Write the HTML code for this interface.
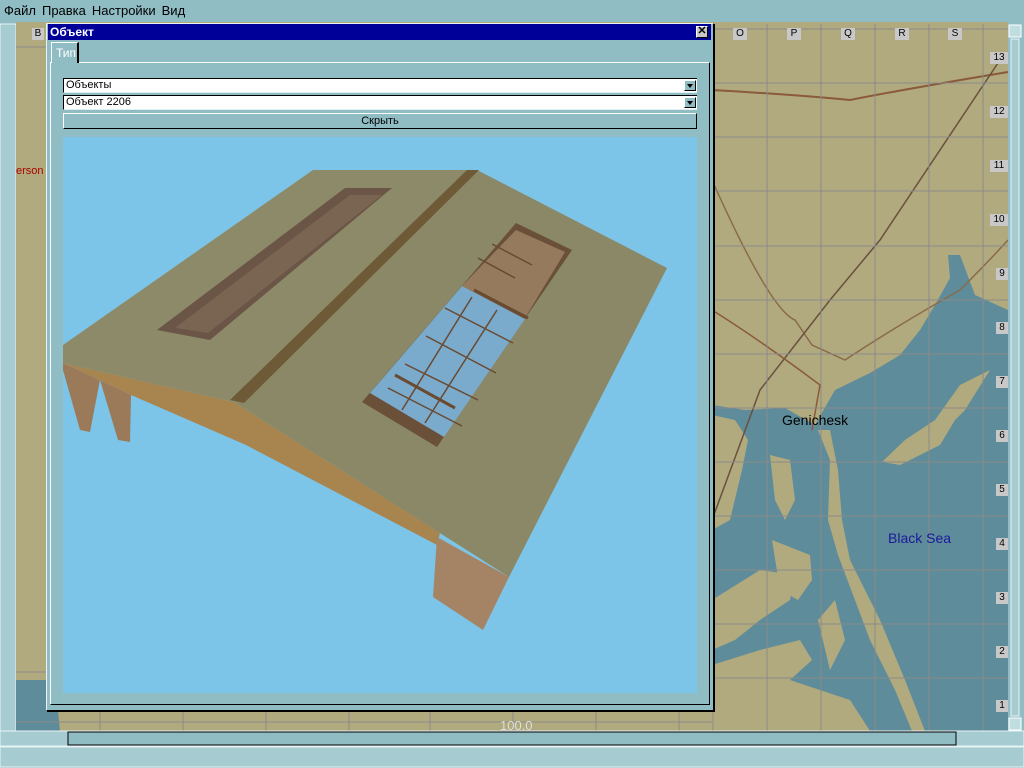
<!DOCTYPE html>
<html><head><meta charset="utf-8"><style>
*{margin:0;padding:0;box-sizing:border-box}
body{width:1024px;height:768px;background:#90bcc4;position:relative;overflow:hidden;font-family:"Liberation Sans",sans-serif;font-size:12px;color:#000}
.abs{position:absolute}
.menu span{margin-right:6px}
.lab{position:absolute;background:#c8c8c8;font-size:10px;text-align:center;line-height:12px;height:12px;color:#000}
.combo{position:absolute;left:63px;width:634px;height:15px;background:#fff;border-top:1px solid #000;border-left:1px solid #000;border-bottom:1px solid #e0f0f0;font-size:11px;line-height:13px;padding-left:2px}
.combo b{position:absolute;right:1px;top:1px;width:12px;height:11px;background:#90bcc4;border:1px solid #000;border-top-color:#fff;border-left-color:#fff}
.combo b:after{content:"";position:absolute;left:2px;top:3px;border-left:3px solid transparent;border-right:3px solid transparent;border-top:4px solid #000}
</style></head><body>
<div class="abs menu" style="left:4px;top:3px;font-size:13px"><span>Файл</span><span>Правка</span><span>Настройки</span><span>Вид</span></div>

<svg class="abs" style="left:0;top:0" width="1024" height="768">
 <rect x="0" y="22" width="1024" height="746" fill="#90bcc4"/>
 <rect x="0" y="24" width="16" height="707" fill="#a6ccd2" stroke="#e8f4f4"/>
 <rect x="16" y="22" width="992" height="709" fill="#b1aa7e"/>
 <!-- sea -->
 <path d="M712,405 L745,410 L785,408 L815,425 L835,390 L870,373 L900,355 L920,330 L935,305 L950,278 L948,255 L960,255 L975,295 L1008,310 L1008,731 L712,731 Z" fill="#5f8c9a"/>
 <path d="M818,430 L830,460 L828,520 L838,555 L870,640 L895,690 L912,731 L925,731 L905,680 L880,620 L850,560 L842,520 L838,470 L830,430 Z" fill="#b1aa7e"/>
 <path d="M882,462 L905,440 L935,420 L960,385 L990,370 L965,410 L955,420 L940,445 L900,465 Z" fill="#b1aa7e"/>
 <path d="M712,415 L735,420 L748,440 L742,470 L730,520 L712,530 Z" fill="#b1aa7e"/>
 <path d="M770,455 L790,460 L795,500 L785,520 L775,500 Z" fill="#b1aa7e"/>
 <path d="M772,540 L810,555 L812,580 L798,600 L780,590 Z" fill="#b1aa7e"/>
 <path d="M712,600 L760,570 L795,575 L790,600 L760,620 L735,640 L712,650 Z" fill="#b1aa7e"/>
 <path d="M712,665 L760,650 L800,640 L812,660 L790,680 L820,690 L850,700 L870,731 L712,731 Z" fill="#b1aa7e"/>
 <path d="M818,620 L835,600 L845,640 L830,670 Z" fill="#b1aa7e"/>
 <path d="M16,680 L55,680 L60,731 L16,731 Z" fill="#5f8c9a"/>
 <!-- roads -->
 <path d="M712,90 Q800,95 850,100 Q900,90 1008,72" stroke="#8a5a3a" stroke-width="2" fill="none"/>
 <path d="M712,180 Q770,310 795,320 L812,345 L845,360 Q890,330 960,290 Q990,260 1008,240" stroke="#8a6a4a" stroke-width="1.5" fill="none"/>
 <path d="M712,520 L760,390 L830,300 L880,240 L1000,60" stroke="#6a5040" stroke-width="1.5" fill="none"/>
 <path d="M712,310 Q760,340 820,385 L812,430" stroke="#8a5a3a" stroke-width="1.5" fill="none"/>
 <!-- grid -->
 <g stroke="#8a8a8a" stroke-width="1">
  <path d="M767,24V731M821,24V731M875,24V731M929,24V731M983,24V731M713,24V731"/>
  <path d="M712,29H1008M712,83H1008M712,137H1008M712,191H1008M712,246H1008M712,300H1008M712,354H1008M712,408H1008M712,462H1008M712,516H1008M712,570H1008M712,624H1008M712,678H1008"/>
  <path d="M16,47H46M16,672H46M16,722H712M100,710V731M183,710V731M266,710V731M349,710V731M430,710V731M513,710V731M596,710V731M679,710V731"/>
 </g>
 <text x="782" y="425" font-family="Liberation Sans" font-size="14" fill="#000">Genichesk</text>
 <text x="888" y="543" font-family="Liberation Sans" font-size="14" fill="#1a1a9a">Black Sea</text>
 <text x="500" y="730" font-family="Liberation Sans" font-size="13" fill="#ddd">100.0</text>
 <text x="16" y="174" font-family="Liberation Sans" font-size="11" fill="#a00">erson</text>
 <!-- right scrollbar -->
 <rect x="1008" y="24" width="16" height="707" fill="#90bcc4"/>
 <rect x="1009" y="25" width="12" height="12" fill="#c0dde0" stroke="#fff"/>
 <rect x="1011" y="39" width="8" height="677" fill="#a6ccd2" stroke="#e8f4f4"/>
 <rect x="1009" y="718" width="12" height="12" fill="#c0dde0" stroke="#fff"/>
 <!-- bottom scrollbar -->
 <rect x="0" y="731" width="1024" height="15" fill="#a6ccd2" stroke="#e8f4f4"/>
 <rect x="68" y="732" width="888" height="13" fill="#90bcc4" stroke="#000" stroke-width="1"/>
 <rect x="0" y="747" width="1024" height="20" fill="#a6ccd2" stroke="#e8f4f4"/>
</svg>
<div class="lab" style="left:733px;top:28px;width:14px">O</div>
<div class="lab" style="left:787px;top:28px;width:14px">P</div>
<div class="lab" style="left:841px;top:28px;width:14px">Q</div>
<div class="lab" style="left:895px;top:28px;width:14px">R</div>
<div class="lab" style="left:948px;top:28px;width:14px">S</div>
<div class="lab" style="left:32px;top:28px;width:12px">B</div>
<div class="lab" style="left:990px;top:52px;width:18px">13</div>
<div class="lab" style="left:990px;top:106px;width:18px">12</div>
<div class="lab" style="left:990px;top:160px;width:18px">11</div>
<div class="lab" style="left:990px;top:214px;width:18px">10</div>
<div class="lab" style="left:996px;top:268px;width:12px">9</div>
<div class="lab" style="left:996px;top:322px;width:12px">8</div>
<div class="lab" style="left:996px;top:376px;width:12px">7</div>
<div class="lab" style="left:996px;top:430px;width:12px">6</div>
<div class="lab" style="left:996px;top:484px;width:12px">5</div>
<div class="lab" style="left:996px;top:538px;width:12px">4</div>
<div class="lab" style="left:996px;top:592px;width:12px">3</div>
<div class="lab" style="left:996px;top:646px;width:12px">2</div>
<div class="lab" style="left:996px;top:700px;width:12px">1</div>

<!-- dialog -->
<div class="abs" style="left:46px;top:23px;width:668px;height:688px;background:#90bcc4;border:1px solid #000;border-top-color:#e8f4f4;border-left-color:#e8f4f4;box-shadow:1px 1px 0 #000"></div>
<div class="abs" style="left:48px;top:24px;width:663px;height:16px;background:#000099;color:#fff;font-weight:bold;font-size:12px;line-height:16px;padding-left:2px">Объект</div>
<div class="abs" style="left:696px;top:26px;width:12px;height:12px;background:#c8c8c8;border:1px solid #fff;border-right-color:#000;border-bottom-color:#000;font-size:11px;line-height:9px;text-align:center;font-weight:bold">✕</div>
<div class="abs" style="left:50px;top:62px;width:660px;height:643px;border:1px solid #fff;border-right-color:#000;border-bottom-color:#000"></div>
<div class="abs" style="left:51px;top:42px;width:28px;height:21px;background:#90bcc4;border:1px solid #fff;border-bottom:none;border-right:2px solid #000;color:#fff;font-size:12px;padding:3px 0 0 4px">Тип</div>
<div class="combo" style="top:78px">Объекты<b></b></div>
<div class="combo" style="top:95px">Объект 2206<b></b></div>
<div class="abs" style="left:63px;top:113px;width:634px;height:16px;border:1px solid #fff;border-right-color:#000;border-bottom-color:#000;text-align:center;font-size:11px;line-height:14px">Скрыть</div>
<div class="abs" style="left:63px;top:137px;width:634px;height:556px;background:#7dc5e8"></div>
<svg class="abs" style="left:0;top:0" width="712" height="700">
 <polygon points="63,363 234,402 440,533 437,545 246,445 131,395" fill="#a8854f"/>
 <polygon points="63,363 131,395 130,442 118,440 100,380 90,432 80,430 63,370" fill="#9a7a58"/>
 <polygon points="437,537 509,577 483,630 433,597" fill="#a58465"/>
 <polygon points="63,345 313,170 477,170 234,402 63,363" fill="#8c8a68"/>
 <polygon points="477,170 667,268 509,577 234,402" fill="#8a8866"/>
 <polygon points="467,170 479,170 244,403 230,400" fill="#6e5a36"/>
 <polygon points="157,330 345,188 392,188 210,340" fill="#6a5546"/>
 <polygon points="175,328 350,195 382,195 208,333" fill="#7a6452"/>
 <polygon points="516,223 572,250 437,447 362,402" fill="#6a5038"/>
 <polygon points="516,230 565,252 525,318 462,286" fill="#967a5e"/>
 <polygon points="462,286 525,319 444,437 370,393" fill="#7aaacc"/>
 <g stroke="#6a4a30" stroke-width="1.5" fill="none"><path d="M445,308L513,343M426,336L496,373M405,364L478,400M388,388L462,426M472,297L402,410M497,310L425,423M478,258L515,278M492,244L532,265"/></g>
 <g stroke="#6a4a30" stroke-width="3"><path d="M474,290L528,318M395,375L455,408"/></g>
</svg>
</body></html>
